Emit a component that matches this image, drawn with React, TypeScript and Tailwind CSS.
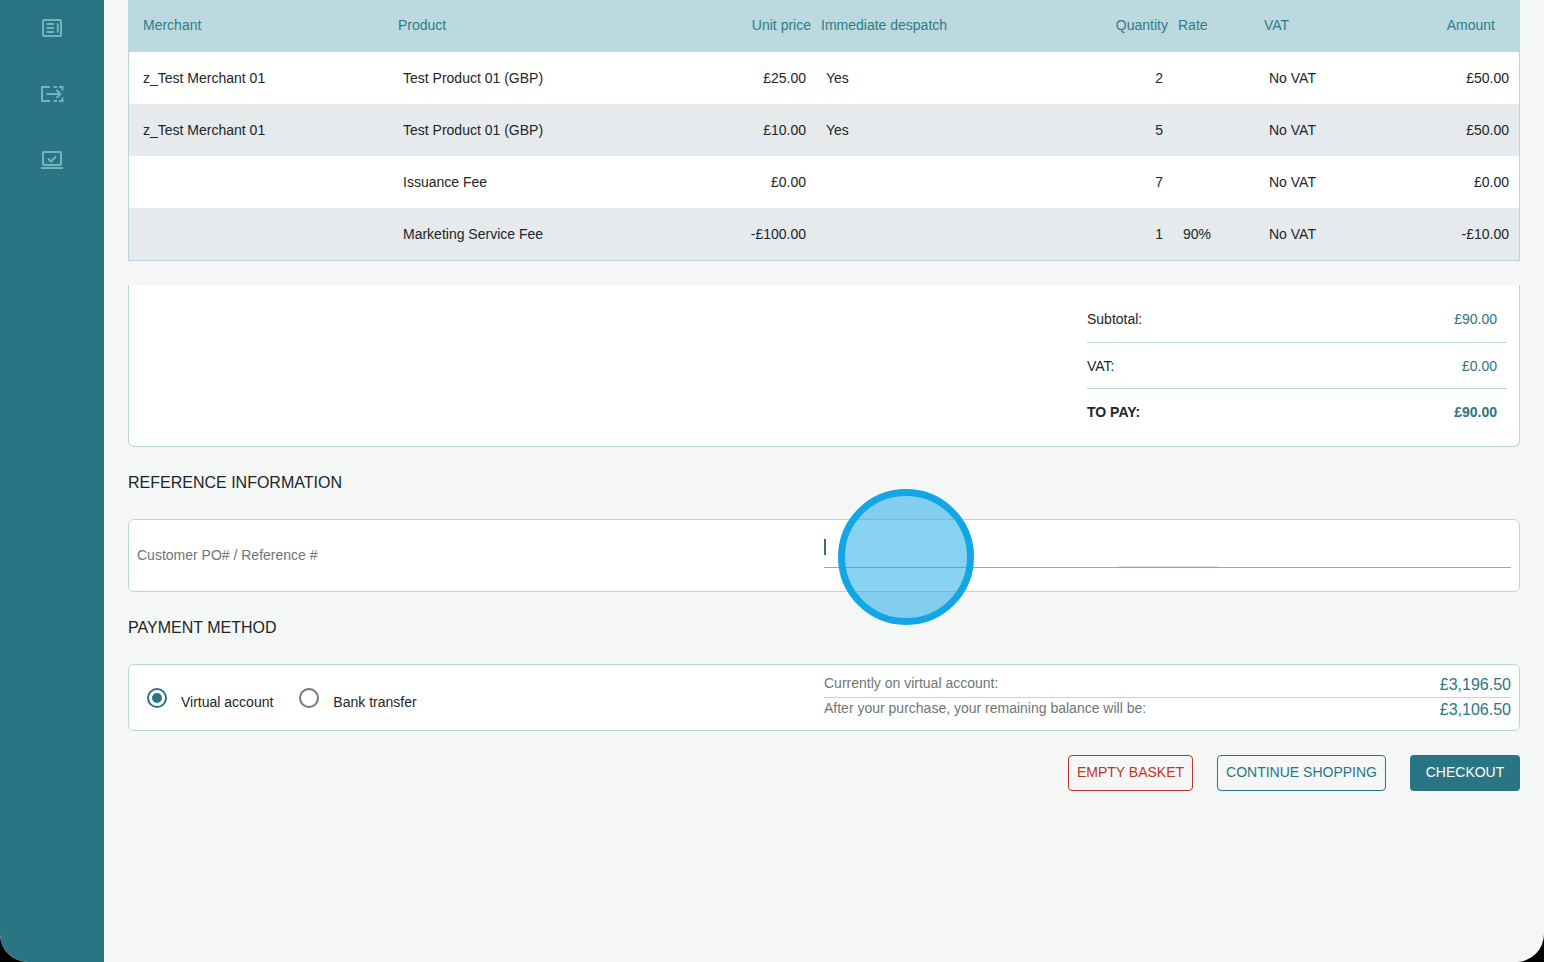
const rows = [
  { merchant: "z_Test Merchant 01", product: "Test Product 01 (GBP)", price: "£25.00", despatch: "Yes", qty: "2", rate: "", vat: "No VAT", amount: "£50.00" },
  { merchant: "z_Test Merchant 01", product: "Test Product 01 (GBP)", price: "£10.00", despatch: "Yes", qty: "5", rate: "", vat: "No VAT", amount: "£50.00" },
  { merchant: "", product: "Issuance Fee", price: "£0.00", despatch: "", qty: "7", rate: "", vat: "No VAT", amount: "£0.00" },
  { merchant: "", product: "Marketing Service Fee", price: "-£100.00", despatch: "", qty: "1", rate: "90%", vat: "No VAT", amount: "-£10.00" },
];

const gridCols = "grid grid-cols-[264px_300px_123px_250px_107px_86px_121px_139px] items-center";

function NewsIcon() {
  return (
    <svg width="24" height="24" viewBox="0 0 24 24" fill="none" stroke="#6db6c3" strokeWidth="2">
      <rect x="3" y="4" width="18" height="16" rx="1.5" />
      <path d="M6.5 8H14M6.5 12H14M6.5 16H14M17.8 7.5V16.5" />
    </svg>
  );
}

function TransferIcon() {
  return (
    <svg width="24" height="24" viewBox="0 0 24 24" fill="none" stroke="#6db6c3" strokeWidth="2">
      <path d="M10 5H2V19H10" />
      <path d="M13.5 5H17M19 5H22.5V8.5M22.5 15.5V19H19M17 19H13.5" />
      <path d="M6.5 12H20.5M16.5 8L20.5 12L16.5 16" strokeWidth="1.8" />
    </svg>
  );
}

function LaptopCheckIcon() {
  return (
    <svg width="24" height="24" viewBox="0 0 24 24" fill="none" stroke="#6db6c3" strokeWidth="2">
      <rect x="3" y="4" width="18" height="13" rx="1" />
      <path d="M1 20H23" />
      <path d="M8 10.5L11 13.5L16 8.5" />
    </svg>
  );
}

function Radio({ checked }: { checked?: boolean }) {
  return (
    <span
      className={
        checked
          ? "flex h-5 w-5 items-center justify-center rounded-full border-2 border-[#2a7583]"
          : "flex h-5 w-5 items-center justify-center rounded-full border-2 border-[#757575]"
      }
    >
      {checked && <span className="h-[10px] w-[10px] rounded-full bg-[#2a7583]" />}
    </span>
  );
}

export default function App() {
  return (
    <div className="h-screen w-full overflow-hidden bg-black font-['Liberation_Sans',sans-serif] text-sm text-[#212529]">
      <div className="relative flex h-full overflow-hidden rounded-b-[28px] bg-[#f5f7f7]">
        {/* Sidebar */}
        <aside className="flex w-[104px] shrink-0 flex-col items-center gap-[42px] bg-[#2a7583] pt-4">
          <NewsIcon />
          <TransferIcon />
          <LaptopCheckIcon />
        </aside>

        <main className="flex-1 px-6">
          {/* Basket table */}
          <div className="border-x border-b border-[#bcd5da]">
            <div className={`${gridCols} h-[52px] bg-[#bcd9df] pb-[2px] text-[#2f7c8a]`}>
              <div className="pl-[14px]">Merchant</div>
              <div className="pl-[5px]">Product</div>
              <div className="pr-[5px] text-right">Unit price</div>
              <div className="pl-[5px]">Immediate despatch</div>
              <div className="pr-[5px] text-right">Quantity</div>
              <div className="pl-[5px]">Rate</div>
              <div className="pl-[5px]">VAT</div>
              <div className="pr-[24px] text-right">Amount</div>
            </div>
            {rows.map((row, i) => (
              <div
                key={i}
                className={`${gridCols} h-[52px] ${i % 2 === 1 ? "bg-[#e6eaec]" : "bg-white"}`}
              >
                <div className="pl-[14px]">{row.merchant}</div>
                <div className="pl-[10px]">{row.product}</div>
                <div className="pr-[10px] text-right">{row.price}</div>
                <div className="pl-[10px]">{row.despatch}</div>
                <div className="pr-[10px] text-right">{row.qty}</div>
                <div className="pl-[10px]">{row.rate}</div>
                <div className="pl-[10px]">{row.vat}</div>
                <div className="pr-[10px] text-right">{row.amount}</div>
              </div>
            ))}
          </div>

          {/* Totals */}
          <div className="mt-6 rounded-b-md border-x border-b border-[#bcd5da] bg-white pt-[11px] pb-3">
            <div className="mr-3 ml-auto w-[420px]">
              <div className="flex h-[47px] items-center justify-between border-b border-[#bcd5da] pr-[10px]">
                <span>Subtotal:</span>
                <span className="text-[#2a7583]">£90.00</span>
              </div>
              <div className="flex h-[46px] items-center justify-between border-b border-[#bcd5da] pr-[10px]">
                <span>VAT:</span>
                <span className="text-[#2a7583]">£0.00</span>
              </div>
              <div className="flex h-[45px] items-center justify-between pr-[10px] font-bold">
                <span>TO PAY:</span>
                <span className="text-[#2a7583]">£90.00</span>
              </div>
            </div>
          </div>

          <h2 className="flex h-[72px] items-center text-base text-[#1c2527]">REFERENCE INFORMATION</h2>

          {/* Reference */}
          <div className="flex h-[73px] items-center rounded-md border border-[#bcd5da] bg-white pr-2 pl-2">
            <label className="mb-[2px] w-[687px] shrink-0 text-[#6d7678]">Customer PO# / Reference #</label>
            <div className="relative mb-[5px] h-[30px] flex-1 border-b border-[#7fb0bb] pt-px">
              <div className="h-4 w-[2px] bg-[#2a7583]" />
              <div className="absolute right-[293px] bottom-0 h-px w-[100px] bg-[#d5e6ea]" />
            </div>
          </div>

          <h2 className="flex h-[72px] items-center text-base text-[#1c2527]">PAYMENT METHOD</h2>

          {/* Payment method */}
          <div className="flex h-[67px] rounded-md border border-[#bcd5da] bg-white pr-2">
            <div className="flex w-[695px] shrink-0 items-center pl-[18px]">
              <Radio checked />
              <span className="mt-[9px] ml-[14px]">Virtual account</span>
              <span className="ml-[26px]">
                <Radio />
              </span>
              <span className="mt-[9px] ml-[14px]">Bank transfer</span>
            </div>
            <div className="flex-1 pt-[7px] text-[#6d7678]">
              <div className="flex h-[26px] items-center justify-between border-b border-[#bcd5da]">
                <span className="-mt-[3px]">Currently on virtual account:</span>
                <span className="text-base text-[#2a7583]">£3,196.50</span>
              </div>
              <div className="flex h-[23px] items-center justify-between">
                <span className="-mt-[4px]">After your purchase, your remaining balance will be:</span>
                <span className="text-base text-[#2a7583]">£3,106.50</span>
              </div>
            </div>
          </div>

          {/* Actions */}
          <div className="mt-6 flex justify-end gap-6">
            <button className="h-9 w-[125px] rounded-[4px] border border-[#bd3527] pb-[2px] text-[#bd3527]">EMPTY BASKET</button>
            <button className="h-9 w-[169px] rounded-[4px] border border-[#2a7583] pb-[2px] text-[#2a7583]">CONTINUE SHOPPING</button>
            <button className="h-9 w-[110px] rounded-[4px] bg-[#2a7583] pb-[2px] text-white">CHECKOUT</button>
          </div>
        </main>

        {/* Click highlight */}
        <div className="absolute top-[489px] left-[838px] h-[136px] w-[136px] rounded-full border-[7px] border-[#12a6e6] bg-[#12a6e6]/50" />
      </div>
    </div>
  );
}
